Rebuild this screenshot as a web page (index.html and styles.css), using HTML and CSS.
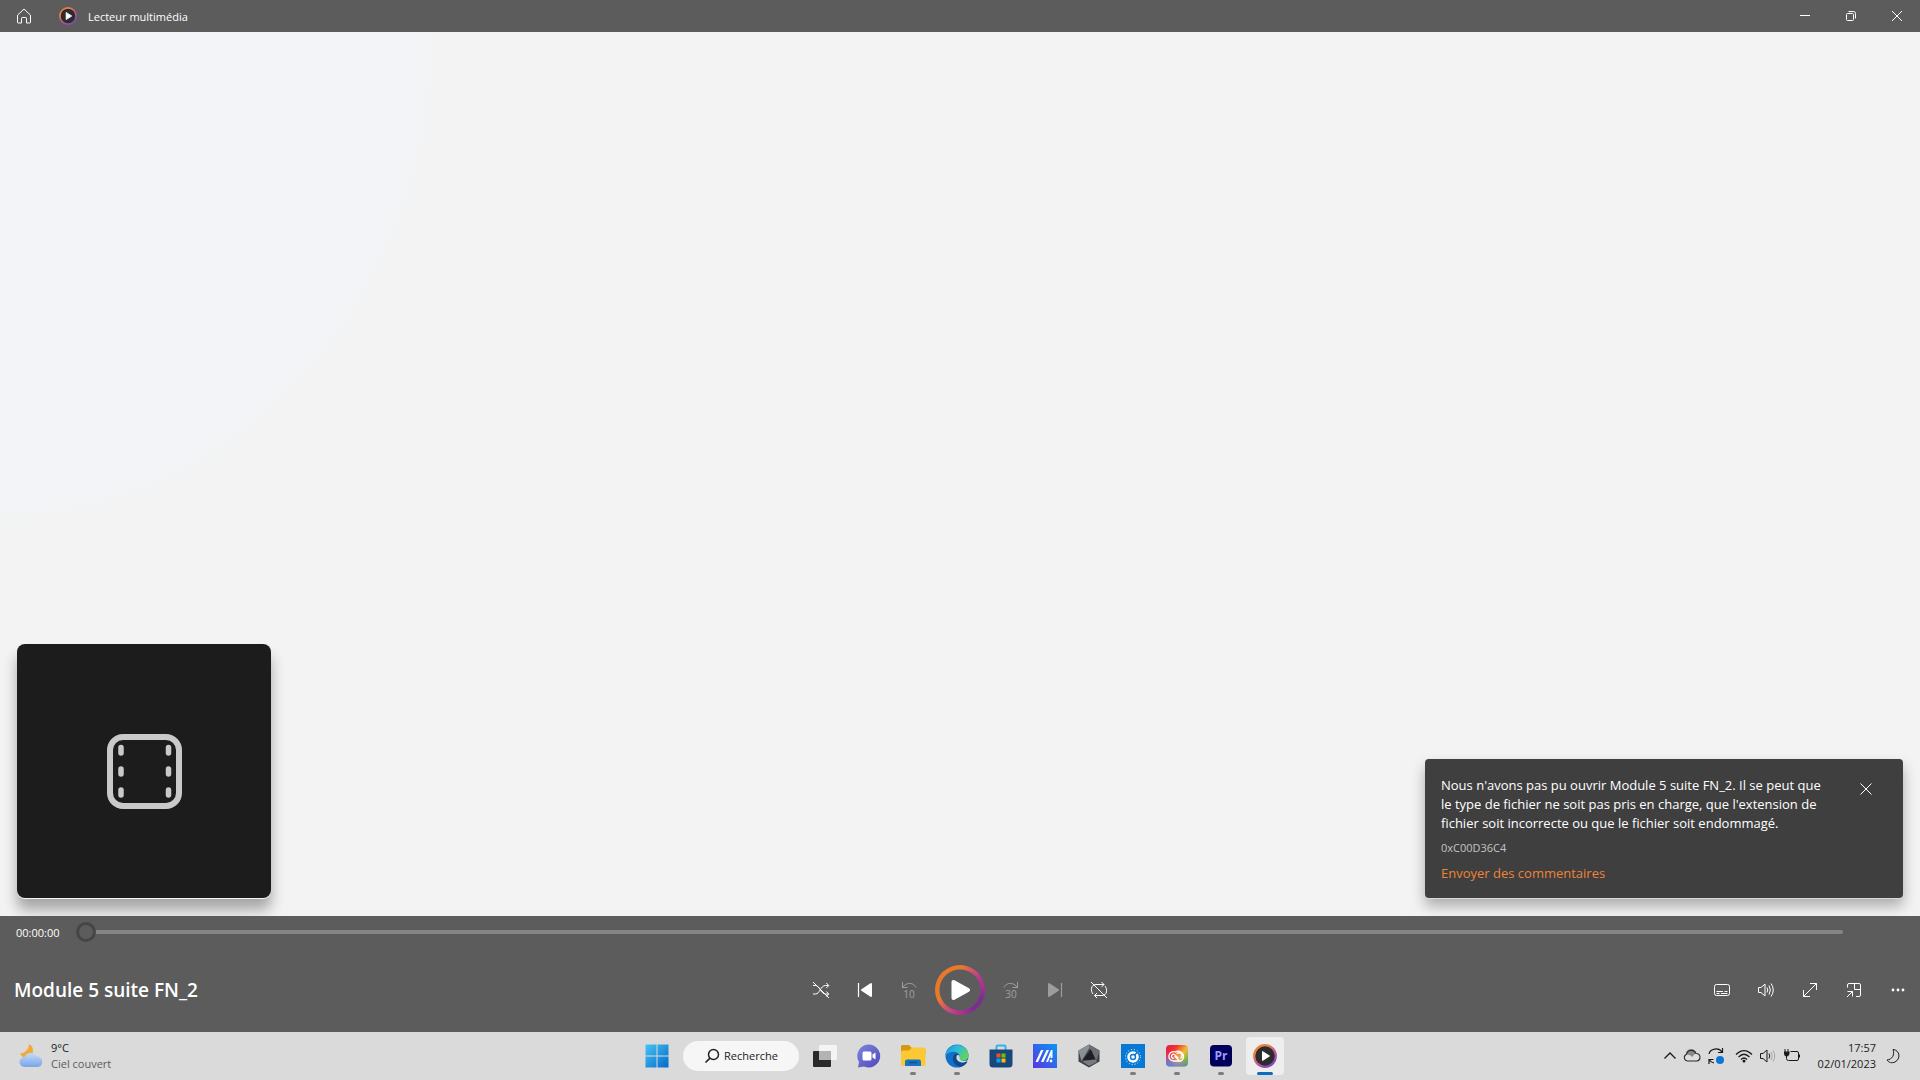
FILE: index.html
```html
<!DOCTYPE html>
<html lang="fr">
<head>
  <meta charset="UTF-8">
  <title>Lecteur multimédia</title>
  <meta name="viewport" content="width=device-width, initial-scale=1.0">
  <link rel="stylesheet" href="styles.css">
</head>
<body>

  <header class="titlebar">
    <button class="home" aria-label="Accueil">
      <svg width="16" height="16" viewBox="0 0 16 16" class="line"><path d="M1.5 7.2 L8 1 L14.5 7.2 V14.3 Q14.5 15 13.8 15 H10.5 V10.3 Q10.5 9.5 9.7 9.5 H6.3 Q5.5 9.5 5.5 10.3 V15 H2.2 Q1.500 15 1.500 14.3 Z"/></svg>
    </button>
    <svg class="app-logo" width="18" height="18" viewBox="0 0 24 24">
      <defs>
        <linearGradient id="ring" x1="0" y1="0" x2="0.7" y2="1">
          <stop offset="0.3" stop-color="#e8823c"/>
          <stop offset="0.6" stop-color="#c95a8c"/>
          <stop offset="1" stop-color="#8248b8"/>
        </linearGradient>
      </defs>
      <circle cx="12" cy="12" r="10.800" fill="#2c2c2e" stroke="url(#ring)" stroke-width="2.200"/>
      <path d="M9.500 7.200 L17 12 L9.500 16.800 Z" fill="#fff" stroke="#fff" stroke-linejoin="round"/>
    </svg>
    <span class="app-name">Lecteur multimédia</span>
    <div class="window-buttons">
      <button aria-label="Réduire"><svg width="12" height="12" viewBox="0 0 12 12" class="line"><path d="M1 5.500 H11"/></svg></button>
      <button aria-label="Niveau inférieur"><svg width="12" height="12" viewBox="0 0 12 12" class="line"><rect x="1.500" y="3.500" width="7" height="7" rx="1"/><path d="M3.500 1.500 H8.500 Q10.500 1.500 10.500 3.500 V8.500"/></svg></button>
      <button aria-label="Fermer"><svg width="12" height="12" viewBox="0 0 12 12" class="line"><path d="M1 1 L11 11 M11 1 L1 11"/></svg></button>
    </div>
  </header>

  <main class="stage">
    <div class="cover">
      <svg width="76" height="76" viewBox="0 0 76 76">
        <rect x="4" y="4" width="69" height="69" rx="13" fill="none" stroke="#c9c9c9" stroke-width="6"/>
        <path d="M15 14.500 V20 M15 36 V41 M15 57 V62 M62.500 14.500 V20 M62.500 36 V41 M62.500 57 V62" stroke="#c9c9c9" stroke-width="5.500" stroke-linecap="round"/>
      </svg>
    </div>

    <div class="toast" role="alert">
      <div class="toast-text">
        <p>Nous n'avons pas pu ouvrir Module 5 suite FN_2. Il se peut que le type de fichier ne soit pas pris en charge, que l'extension de fichier soit incorrecte ou que le fichier soit endommagé.</p>
        <small>0xC00D36C4</small>
        <a href="#">Envoyer des commentaires</a>
      </div>
      <button class="toast-close" aria-label="Fermer le message"><svg width="12" height="12" viewBox="0 0 12 12" class="line"><path d="M0.500 0.500 L11.500 11.500 M11.500 0.500 L0.500 11.500"/></svg></button>
    </div>
  </main>

  <section class="player">
    <div class="seek">
      <label for="position">00:00:00</label>
      <input type="range" id="position" min="0" max="100" value="0">
    </div>

    <div class="controls">
      <h1>Module 5 suite FN_2</h1>

      <div class="transport">
        <button aria-label="Lecture aléatoire désactivée">
          <svg width="18" height="18" viewBox="0 0 18 18" class="line"><path d="M1 4.500 H3.500 C8 4.500 8.500 13 13.500 13 H16.500 M1 13 H3.500 C8 13 8.500 4.500 13.500 4.500 H16.500 M14.300 2 L16.800 4.500 L14.300 7 M14.300 10.500 L16.800 13 L14.300 15.500 M1 1 L17 17"/></svg>
        </button>
        <button aria-label="Précédent">
          <svg width="18" height="18" viewBox="0 0 18 18"><path d="M2.500 2 V16" stroke="#fff" stroke-width="1.200"/><path d="M15 3 V15 L6 9 Z" fill="#fff" stroke="#fff" stroke-width="2" stroke-linejoin="round"/></svg>
        </button>
        <button class="skip" aria-label="Reculer de 10 secondes" disabled>
          <svg width="16" height="7" viewBox="0 0 16 7" class="line"><path d="M1.500 0 V5.500 H6.500 M1.500 5.500 C5 0.500 12 -0.500 15 5.500"/></svg>
          <span>10</span>
        </button>
        <button class="play" aria-label="Lecture">
          <svg width="50" height="50" viewBox="0 0 50 50">
            <path d="M18.500 17 V33 L33 25 Z" fill="#fff" stroke="#fff" stroke-width="4" stroke-linejoin="round"/>
          </svg>
        </button>
        <button class="skip" aria-label="Avancer de 30 secondes" disabled>
          <svg width="16" height="7" viewBox="0 0 16 7" class="line"><path d="M14.500 0 V5.500 H9.500 M14.500 5.500 C11 0.500 4 -0.500 1 5.500"/></svg>
          <span>30</span>
        </button>
        <button aria-label="Suivant" disabled>
          <svg width="18" height="18" viewBox="0 0 18 18"><path d="M15.500 2 V16" stroke="#fff" stroke-width="1.200"/><path d="M3 3 V15 L12 9 Z" fill="#fff" stroke="#fff" stroke-width="2" stroke-linejoin="round"/></svg>
        </button>
        <button aria-label="Répétition désactivée">
          <svg width="18" height="18" viewBox="0 0 18 18" class="line"><path d="M3 13 C0.500 10 0.500 3.500 6 3.500 H14 M11.500 1 L14 3.500 L11.500 6 M15 5 C17.500 8 17.500 14.500 12 14.500 H4.500 M7 12 L4.500 14.500 L7 17 M1 1 L17 17"/></svg>
        </button>
      </div>

      <div class="options">
        <button aria-label="Sous-titres">
          <svg width="18" height="18" viewBox="0 0 18 18" class="line"><rect x="1.500" y="3.500" width="15" height="11" rx="2"/><path d="M3.500 10.500 H10 M11.500 10.500 H14.500 M3.500 12.500 H6.500 M8 12.500 H14.500"/></svg>
        </button>
        <button aria-label="Volume">
          <svg width="18" height="18" viewBox="0 0 18 18" class="line"><path d="M1.500 6.500 H4 L8 3 V15 L4 11.500 H1.500 Z M10 6.500 Q11.500 9 10 11.500 M12 4.500 Q14.800 9 12 13.500 M14 2.500 Q18.500 9 14 15.500"/></svg>
        </button>
        <button aria-label="Plein écran">
          <svg width="18" height="18" viewBox="0 0 18 18" class="line"><path d="M9 2.500 H15.500 V9 M15.500 2.500 L2.500 15.500 M2.500 9 V15.500 H9"/></svg>
        </button>
        <button aria-label="Mini-lecteur">
          <svg width="18" height="18" viewBox="0 0 18 18" class="line"><path d="M2.500 6.500 V4 Q2.500 2.500 4 2.500 H14 Q15.500 2.500 15.500 4 V14 Q15.500 15.500 14 15.500 H11 M9.500 2.500 V8.500 H15.500 M2.500 10.500 H7.500 V15.500 M7.500 10.500 L2 16"/></svg>
        </button>
        <button aria-label="Plus d'options">
          <svg width="18" height="18" viewBox="0 0 18 18" fill="#fff"><circle cx="4" cy="9" r="1.400"/><circle cx="9" cy="9" r="1.400"/><circle cx="14" cy="9" r="1.400"/></svg>
        </button>
      </div>
    </div>
  </section>

  <footer class="taskbar">
    <a class="weather" href="#">
      <svg width="26" height="26" viewBox="0 0 26 26">
        <defs><linearGradient id="cloud" x1="0" y1="0" x2="0" y2="1"><stop offset="0" stop-color="#c3dcfa"/><stop offset="1" stop-color="#7ba3e6"/></linearGradient></defs>
        <path d="M11 1 C10.500 7 7 10 2 10.500 C4 15 9 16 13 13 C16 10 16 3 11 1 Z" fill="#f2a93b"/>
        <path d="M6.500 24 A5 5 0 0 1 6.500 14 A7 7 0 0 1 19 13.500 A5.300 5.300 0 0 1 20 24 Z" fill="url(#cloud)"/>
      </svg>
      <span>9°C<br><span class="sky">Ciel couvert</span></span>
    </a>

    <nav class="apps">
      <button class="app" aria-label="Démarrer">
        <svg width="24" height="24" viewBox="0 0 24 24"><defs><linearGradient id="win" x1="0" y1="0" x2="1" y2="1"><stop offset="0" stop-color="#45c4f5"/><stop offset="1" stop-color="#0669c8"/></linearGradient></defs><path d="M0.500 0.500 H11.500 V11.500 H0.500 Z M12.500 0.500 H23.500 V11.500 H12.500 Z M0.500 12.500 H11.500 V23.500 H0.500 Z M12.500 12.500 H23.500 V23.500 H12.500 Z" fill="url(#win)"/></svg>
      </button>
      <button class="search">
        <svg width="16" height="16" viewBox="0 0 16 16"><circle cx="9.500" cy="6.500" r="5" fill="none" stroke="#222" stroke-width="1.500"/><path d="M6 10.200 L1.500 14.500" stroke="#222" stroke-width="1.600"/></svg>
        Recherche
      </button>
      <button class="app" aria-label="Vue des tâches">
        <svg width="24" height="24" viewBox="0 0 24 24"><rect x="6" y="1" width="18" height="15" rx="1" fill="#f4f4f4"/><rect x="0" y="7" width="18" height="16" rx="1" fill="#2a2a2a"/><rect x="6" y="7" width="12" height="9" fill="#b3b3b3"/></svg>
      </button>
      <button class="app" aria-label="Conversation">
        <svg width="24" height="24" viewBox="0 0 24 24"><defs><linearGradient id="chat" x1="0" y1="0" x2="1" y2="1"><stop offset="0" stop-color="#7d86dc"/><stop offset="1" stop-color="#5046bd"/></linearGradient></defs><path d="M12 0.500 A11.500 11.500 0 1 1 7 22.500 L1 23.500 L2 18 A11.500 11.500 0 0 1 12 0.500 Z" fill="url(#chat)"/><rect x="5.500" y="7.500" width="9" height="9" rx="1.500" fill="#fff"/><path d="M15.500 10.500 L18.500 8.500 V15.500 L15.500 13.500 Z" fill="#fff"/></svg>
      </button>
      <button class="app running" aria-label="Explorateur de fichiers">
        <svg width="26" height="24" viewBox="0 0 26 24"><path d="M1 2.500 Q1 1 2.500 1 H9 L12 4 H24 Q25.500 4 25.500 5.500 V10 H1 Z" fill="#d9960f"/><path d="M1 8 Q1 6.500 2.500 6.500 H9 L12 3.500 H24 Q25.500 3.500 25.500 5 V20.500 Q25.500 22 24 22 H2.500 Q1 22 1 20.500 Z" fill="#fcc934"/><path d="M5 22 V17.500 Q5 15.500 7 15.500 H19 Q21 15.500 21 17.500 V22 Z" fill="#1673c4"/><path d="M9 18.500 H17" stroke="#0c5496" stroke-width="1.500"/></svg>
      </button>
      <button class="app running" aria-label="Microsoft Edge">
        <svg width="24" height="24" viewBox="0 0 24 24"><defs><linearGradient id="edge" x1="0" y1="0" x2="1" y2="0.500"><stop offset="0" stop-color="#1b8fdc"/><stop offset="0.500" stop-color="#2bbde0"/><stop offset="1" stop-color="#62d45c"/></linearGradient></defs><circle cx="12" cy="12" r="11.500" fill="#1470c6"/><path d="M0.500 11.500 C1 -2 22 -3 23.500 11 C23.700 16 18.500 18 15 16 C13.500 15 15 14 14.700 12 C14 7 5 6 0.500 11.500 Z" fill="url(#edge)"/><path d="M9 11 C6 15 9 22 15.500 23 C19 22 21.500 20 22.500 17.500 C19 19.500 13 19 11.500 15.500 C10.800 14 11.500 12 13.500 10.500 C12 9.500 10 9.500 9 11 Z" fill="#114a8b"/><path d="M12.500 11 C10.500 13 11.500 16.500 15 18 C18 19 21.500 18 23.500 16 C19 18 14 17 14.700 13 Q14.500 10.500 12.500 11 Z" fill="#dadada"/></svg>
      </button>
      <button class="app" aria-label="Microsoft Store">
        <svg width="24" height="24" viewBox="0 0 24 24"><path d="M7.500 6 V2.500 Q7.500 1.500 8.500 1.500 H15.500 Q16.500 1.500 16.500 2.500 V6" fill="none" stroke="#35b3e8" stroke-width="2"/><path d="M0.500 5.500 H23.500 V20 Q23.500 23.500 20 23.500 H4 Q0.500 23.500 0.500 20 Z" fill="#18477c"/><path d="M7.500 9.500 H11.500 V13.500 H7.500 Z" fill="#f25022"/><path d="M12.500 9.500 H16.500 V13.500 H12.500 Z" fill="#7fba00"/><path d="M7.500 14.500 H11.500 V18.500 H7.500 Z" fill="#00a4ef"/><path d="M12.500 14.500 H16.500 V18.500 H12.500 Z" fill="#ffb900"/></svg>
      </button>
      <button class="app" aria-label="MyASUS">
        <svg width="24" height="24" viewBox="0 0 24 24"><defs><linearGradient id="asus" x1="0" y1="1" x2="1" y2="0"><stop offset="0" stop-color="#5a35e2"/><stop offset="1" stop-color="#0797f5"/></linearGradient></defs><rect width="24" height="24" fill="url(#asus)"/><path d="M2.500 18 L8 6 H10.500 L5 18 Z M8 18 L13.500 6 H16 L10.500 18 Z M13 18 L18 6 H19.500 V14 H17.500 V11.500 L15 18 Z" fill="#fff"/><circle cx="18" cy="17" r="1.400" fill="#fff"/></svg>
      </button>
      <button class="app" aria-label="Armoury Crate">
        <svg width="24" height="24" viewBox="0 0 24 24"><path d="M12 0.500 L22.500 6.500 V17.500 L12 23.500 L1.500 17.500 V6.500 Z" fill="#3d4044"/><path d="M12 0.500 L22.500 6.500 L19.500 17 L12.500 4 Z" fill="#6c7076"/><path d="M1.500 6.500 L12 0.500 L12.500 4 L4.500 17 Z" fill="#8b9096"/><path d="M14 5.500 L18.500 15.500 L5.500 16.500 Z" fill="#1d1f22"/><path d="M5 17 L18.500 15.500 L20 18 L12 22 Z" fill="#777b80"/></svg>
      </button>
      <button class="app running" aria-label="Horloge">
        <svg width="24" height="24" viewBox="0 0 24 24"><rect width="24" height="24" fill="#0778d4"/><circle cx="12" cy="13" r="7.500" fill="none" stroke="#fff" stroke-dasharray="1 2"/><circle cx="12" cy="13" r="4.500" fill="none" stroke="#fff" stroke-width="2.600"/><path d="M12 13 L16.500 8" stroke="#0778d4" stroke-width="1.500"/><circle cx="12" cy="13" r="1.800" fill="#fff"/></svg>
      </button>
      <button class="app running" aria-label="Creative Cloud">
        <svg width="24" height="24" viewBox="0 0 24 24"><defs><linearGradient id="cc" x1="0" y1="0" x2="1" y2="0.700"><stop offset="0" stop-color="#e3185b"/><stop offset="0.350" stop-color="#f2342c"/><stop offset="0.700" stop-color="#f6b935"/><stop offset="1" stop-color="#59b853"/></linearGradient><linearGradient id="cc-low" x1="0.700" y1="0" x2="0.300" y2="1"><stop offset="0.500" stop-color="#b455c8" stop-opacity="0"/><stop offset="1" stop-color="#4b86e8"/></linearGradient></defs><rect x="1" y="1" width="22" height="21.500" rx="4" fill="url(#cc)"/><rect x="1" y="1" width="22" height="21.500" rx="4" fill="url(#cc-low)"/><path d="M16 17 H8.500 A4.700 4.700 0 1 1 10.500 8 A5 5 0 1 1 16 17 Q14.500 17 13.500 16 L10 12.500 M8.500 14.200 A2 2 0 1 1 10 10.900 L13 13.900 M12 9.500 A3 3 0 1 1 16 14" fill="none" stroke="#fff" stroke-width="1.300" stroke-linecap="round"/></svg>
      </button>
      <button class="app running" aria-label="Adobe Premiere Pro">
        <svg width="24" height="24" viewBox="0 0 24 24"><rect x="1" y="1" width="22" height="21.500" rx="4" fill="#00005b"/><text x="12" y="16" class="pr">Pr</text></svg>
      </button>
      <button class="app active" aria-label="Lecteur multimédia">
        <svg width="24" height="24" viewBox="0 0 24 24"><circle cx="12" cy="12" r="10.800" fill="#2c2c2e" stroke="url(#ring)" stroke-width="2.200"/><path d="M9.500 7.500 L16.500 12 L9.500 16.500 Z" fill="#fff" stroke="#fff" stroke-linejoin="round"/></svg>
      </button>
    </nav>

    <div class="tray">
      <button aria-label="Icônes cachées"><svg width="14" height="14" viewBox="0 0 14 14" class="ink"><path d="M1.500 9.500 L7 4 L12.500 9.500" stroke-width="1.300"/></svg></button>
      <button aria-label="OneDrive"><svg width="18" height="14" viewBox="0 0 18 14"><path d="M4.500 12 A3.500 3.500 0 0 1 3.500 5.300 A5 5 0 0 1 13 4.500 A3.800 3.800 0 0 1 14 12 Z" fill="#dedede"/><path d="M3 5.500 A5 5 0 0 1 13 4.500 Q10.500 5 9.500 8 Q7 5 3 5.500 Z" fill="#8a8a8a"/><path d="M4.500 12 A3.500 3.500 0 0 1 3.500 5.300 A5 5 0 0 1 13 4.500 A3.800 3.800 0 0 1 14 12 Z" fill="none" stroke="#2a2a2a" stroke-width="1.100"/></svg></button>
      <button class="sync" aria-label="Windows Update"><svg width="18" height="18" viewBox="0 0 18 18" class="ink"><path d="M2 7 A7 6 0 0 1 15 5 M15.500 1 V5.500 H11 M6.500 12.500 H2 V17 M2.500 13 Q4 15.500 7 16" stroke-width="1.200"/><circle cx="13" cy="13" r="4" fill="#0b76d3" stroke="none"/></svg></button>
      <button aria-label="Wi-Fi"><svg width="18" height="16" viewBox="0 0 18 16" class="ink"><path d="M1 6.500 Q9 -1.500 17 6.500 M3.500 9 Q9 3.500 14.500 9 M6 11.500 Q9 8.500 12 11.500" stroke-width="1.200"/><circle cx="9" cy="13" r="1.500" fill="#1a1a1a" stroke="none"/></svg></button>
      <button aria-label="Volume du système"><svg width="18" height="16" viewBox="0 0 18 16" class="ink"><path d="M1.500 5.500 H4 L8 2 V14 L4 10.500 H1.500 Z M10 5.500 Q11.500 8 10 10.500"/><path d="M12 4 Q14.500 8 12 12 M14 2.500 Q17.500 8 14 13.500" stroke="#a5a5a5"/></svg></button>
      <button aria-label="Batterie"><svg width="18" height="16" viewBox="0 0 18 16" class="ink"><path d="M7.500 3.500 H14 Q15.500 3.500 15.500 5 V11 Q15.500 12.500 14 12.500 H5.500 Q3.500 12.500 3.500 10.500 V8 M2 1 V4 M5 1 V4 M16.500 6.500 V9.500"/><path d="M1 3.500 H6.500 V6 Q5.500 8.500 3.700 8.500 Q1.500 8.500 1 6 Z" fill="#1a1a1a" stroke="none"/></svg></button>
      <time datetime="2023-01-02T17:57">17:57<br>02/01/2023</time>
      <button aria-label="Notifications"><svg width="16" height="16" viewBox="0 0 16 16" class="ink"><path d="M8 1.500 C15 2 16 11 10 14 C7 15.500 3.500 14.500 2 12 C7 11.500 10 7 8 1.500 Z"/></svg></button>
    </div>
  </footer>

</body>
</html>
```

FILE: styles.css
```css
* {
  box-sizing: border-box;
}
body {
  margin: 0;
  min-height: 100vh;
  display: flex;
  flex-direction: column;
  font-family: 'Open Sans', 'Noto Sans', sans-serif;
  font-size: 13px;
  color: white;
  background: #f3f3f3;
}
button {
  display: flex;
  align-items: center;
  justify-content: center;
  padding: 0;
  border: none;
  background: none;
  color: inherit;
  font: inherit;
}
svg {
  display: block;
  flex-shrink: 0;
}
.line {
  fill: none;
  stroke: white;
}
.ink {
  fill: none;
  stroke: #1a1a1a;
}

/* title bar */
.titlebar {
  display: flex;
  align-items: center;
  height: 32px;
  background: #5c5c5c;
}
.home {
  width: 48px;
  height: 32px;
}
.app-logo {
  margin: 0 11px;
}
.app-name {
  font-size: 11px;
}
.window-buttons {
  display: flex;
  margin-left: auto;
}
.window-buttons button {
  width: 46px;
  height: 32px;
}

/* video area */
.stage {
  flex: 1;
  display: flex;
  align-items: flex-end;
  justify-content: space-between;
  padding: 0 17px 18px;
  overflow: hidden;
  background: radial-gradient(ellipse 23% 56% at 0 0, #f2f4f7 95%, #f3f3f3 100%);
}
.cover {
  display: flex;
  align-items: center;
  justify-content: center;
  width: 254px;
  height: 254px;
  border-radius: 8px;
  background: #1c1c1c;
  box-shadow: 0 1px 0 #f2f2f2, 0 12px 14px rgba(0, 0, 0, 0.32);
}
.toast {
  display: flex;
  align-items: flex-start;
  justify-content: space-between;
  width: 478px;
  padding: 17px 16px 15px;
  border-radius: 4px;
  background: #3f3f3f;
  box-shadow: 0 1px 0 #d8d8d8, 0 8px 14px rgba(0, 0, 0, 0.3);
}
.toast-text {
  display: flex;
  flex-direction: column;
  align-items: flex-start;
  gap: 7px;
  width: 390px;
}
.toast p {
  margin: 0;
  line-height: 19px;
}
.toast small {
  font-size: 11px;
  line-height: 16px;
  color: #c4c4c4;
}
.toast a {
  line-height: 20px;
  color: #ee8336;
  text-decoration: none;
}
.toast-close {
  width: 42px;
  height: 26px;
}

/* player */
.player {
  height: 116px;
  background: #5c5c5c;
}
.seek {
  display: flex;
  align-items: center;
  gap: 16px;
  height: 32px;
  padding: 0 77px 0 16px;
}
.seek label {
  width: 44px;
  font-size: 11px;
}
.seek input {
  flex: 1;
  height: 20px;
  margin: 0;
  background: none;
  appearance: none;
}
.seek input::-webkit-slider-runnable-track {
  height: 4px;
  border-radius: 2px;
  background: #858585;
}
.seek input::-webkit-slider-thumb {
  appearance: none;
  width: 20px;
  height: 20px;
  margin-top: -8px;
  border: 3px solid #454545;
  border-radius: 50%;
  background: #5c5c5c;
}
.controls {
  display: grid;
  grid-template-columns: 1fr auto 1fr;
  align-items: center;
  height: 84px;
}
.controls h1 {
  margin: 0;
  padding-left: 14px;
  font-size: 19px;
  font-weight: 600;
}
.transport, .options {
  display: flex;
  align-items: center;
}
.options {
  justify-content: flex-end;
}
.controls button {
  width: 44px;
  height: 44px;
}
.controls button:disabled {
  opacity: 0.4;
}
.controls .play {
  width: 50px;
  height: 50px;
  margin: 0 4px;
  border-radius: 50%;
  background:
    radial-gradient(circle, #5c5c5c 20px, transparent 21px),
    conic-gradient(#e8792a 5deg, #d0566f 30deg, #b03a8c 60deg, #a63191 85deg, #7c2d91 110deg, #7c2d91 145deg, #b3318f 180deg, #c8438a 205deg, #e8792a 245deg);
}
.controls .skip {
  flex-direction: column;
}
.skip span {
  font-size: 10px;
  line-height: 10px;
}

/* taskbar */
.taskbar {
  display: grid;
  grid-template-columns: 1fr auto 1fr;
  align-items: center;
  height: 48px;
  background: #dadada;
  color: #1a1a1a;
  font-size: 11px;
  line-height: 16px;
}
.weather {
  display: flex;
  align-items: center;
  gap: 7px;
  padding-left: 18px;
  color: inherit;
  text-decoration: none;
}
.sky {
  color: #5c5c5c;
}
.apps {
  display: flex;
  align-items: center;
  padding-left: 2px;
}
.app {
  position: relative;
  width: 38px;
  height: 38px;
  margin: 0 3px;
  border-radius: 4px;
}
.search {
  gap: 4px;
  width: 116px;
  height: 30px;
  margin: 0 4px;
  border-radius: 15px;
  background: #f6f6f6;
}
.running::after, .active::after {
  content: "";
  position: absolute;
  left: 16px;
  bottom: 0;
  width: 6px;
  height: 3px;
  border-radius: 2px;
  background: #7c7c7c;
}
.active {
  background: #eeeeee;
}
.active::after {
  left: 11px;
  width: 16px;
  background: #0f6cbd;
}
.pr {
  fill: #9c9cff;
  font-size: 12px;
  font-weight: 700;
  text-anchor: middle;
}
.tray {
  display: flex;
  align-items: center;
  justify-content: flex-end;
  gap: 6px;
  padding-right: 19px;
}
.sync {
  margin-right: 4px;
}
.tray time {
  margin: 0 3px 0 11px;
  text-align: right;
}
```
